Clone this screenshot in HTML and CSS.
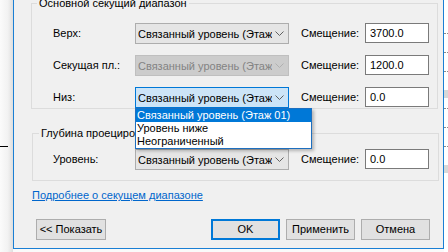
FILE: index.html
```html
<!DOCTYPE html>
<html lang="ru">
<head>
    <meta charset="UTF-8">
    <title>Секущий диапазон</title>
    <link rel="stylesheet" href="styles.css">
</head>
<body>
<div class="screen">
    <div class="side-left"><div class="stub-line"></div></div>

    <div class="dialog">
        <div class="group group-main">
            <div class="group-title">Основной секущий диапазон</div>
            <div class="rows">
                <div class="label">Верх:</div>
                <div class="combo">
                    <span class="combo-text">Связанный уровень (Этаж 01)</span>
                    <svg class="chevron" width="9" height="5" viewBox="0 0 9 5"><polyline points="0.5,0.5 4.5,4.5 8.5,0.5"></polyline></svg>
                </div>
                <div class="label label-offset">Смещение:</div>
                <div class="field">3700.0</div>

                <div class="label">Секущая пл.:</div>
                <div class="combo combo-disabled">
                    <span class="combo-text">Связанный уровень (Этаж 01)</span>
                    <svg class="chevron" width="9" height="5" viewBox="0 0 9 5"><polyline points="0.5,0.5 4.5,4.5 8.5,0.5"></polyline></svg>
                </div>
                <div class="label label-offset">Смещение:</div>
                <div class="field">1200.0</div>

                <div class="label">Низ:</div>
                <div class="combo combo-focus">
                    <span class="combo-text">Связанный уровень (Этаж 01)</span>
                    <svg class="chevron" width="9" height="5" viewBox="0 0 9 5"><polyline points="0.5,0.5 4.5,4.5 8.5,0.5"></polyline></svg>
                    <!-- раскрытый список -->
                    <ul class="dropdown">
                        <li class="selected">Связанный уровень (Этаж 01)</li>
                        <li>Уровень ниже</li>
                        <li>Неограниченный</li>
                    </ul>
                </div>
                <div class="label label-offset">Смещение:</div>
                <div class="field">0.0</div>
            </div>
        </div>

        <div class="group group-depth">
            <div class="group-title">Глубина проецирования</div>
            <div class="rows">
                <div class="label">Уровень:</div>
                <div class="combo">
                    <span class="combo-text">Связанный уровень (Этаж 01)</span>
                    <svg class="chevron" width="9" height="5" viewBox="0 0 9 5"><polyline points="0.5,0.5 4.5,4.5 8.5,0.5"></polyline></svg>
                </div>
                <div class="label label-offset">Смещение:</div>
                <div class="field">0.0</div>
            </div>
        </div>

        <a class="help-link" href="#">Подробнее о секущем диапазоне</a>

        <div class="buttons">
            <div class="btn btn-show">&lt;&lt; Показать</div>
            <div class="btn btn-ok">OK</div>
            <div class="btn">Применить</div>
            <div class="btn">Отмена</div>
        </div>
    </div>

    <div class="side-right">
        <div class="dots dots-1"></div>
        <div class="dots"></div>
        <div class="dots"></div>
        <div class="band"></div>
        <div class="dots"></div>
        <div class="dots"></div>
        <div class="dots"></div>
        <div class="band"></div>
    </div>
</div>
</body>
</html>
```

FILE: styles.css
```css
body {
    margin: 0;
    width: 448px;
    height: 252px;
    overflow: hidden;
    background: #fafafa;
    font-family: "Liberation Sans", Arial, sans-serif;
    font-size: 11px;
    color: #000;
}
.screen {
    display: flex;
    height: 252px;
}
.side-left {
    width: 13px;
    flex-shrink: 0;
    background: linear-gradient(to right, #fbfbfb, #f2f2f2 60%, #dedede);
}
.stub-line {
    margin-top: 146px;
    width: 8px;
    height: 1px;
    background: #000;
}
.dialog {
    width: 431px;
    height: 249px;
    flex-shrink: 0;
    box-sizing: border-box;
    background: #f0f0f0;
    border: 1px solid #1a7fd4;
    border-top: none;
    display: flex;
    flex-direction: column;
}
.side-right {
    flex: 1;
    background: #fff;
    padding-top: 33px;
}
.dots {
    border-top: 1px dotted #8a8a8a;
    margin-bottom: 18px;
}
.band {
    height: 8px;
    background: #d8d8d8;
    margin-bottom: 10px;
}

/* группы */
.group {
    box-sizing: border-box;
    width: 407px;
    border: 1px solid #dcdcdc;
}
.group-main {
    margin: 3px 0 0 17px;
    padding-left: 21px;
}
.group-depth {
    margin: 24px 0 0 18px;
    padding: 0 0 10px 20px;
}
.group-title {
    width: fit-content;
    margin-top: -8px;
    margin-left: -16px;
    padding: 0 2px;
    line-height: 14px;
    background: #f0f0f0;
}
.group-depth .group-title {
    margin-left: -14px;
}
.rows {
    display: grid;
    grid-template-columns: 82px 154px 76px 64px;
    grid-auto-rows: 21px;
    row-gap: 11px;
    align-items: start;
}
.group-main .rows {
    margin-top: 13px;
}
.group-depth .rows {
    margin-top: 9px;
}
.label {
    line-height: 20px;
    white-space: nowrap;
}
.label-offset {
    padding-left: 12px;
}

/* комбобоксы */
.combo {
    position: relative;
    box-sizing: border-box;
    height: 21px;
    display: flex;
    align-items: center;
    padding: 0 4px 0 2px;
    background: #e5e5e5;
    border: 1px solid #adadad;
}
.combo-text {
    flex: 1;
    overflow: hidden;
    white-space: nowrap;
    margin-right: 3px;
}
.chevron {
    flex-shrink: 0;
    fill: none;
    stroke: #606060;
    stroke-width: 1;
}
.combo-disabled {
    background: #cccccc;
    border-color: #bfbfbf;
    color: #838383;
}
.combo-disabled .chevron {
    stroke: #b0b0b0;
}
.combo-focus {
    background: #cce4f7;
    border-color: #0078d7;
}
.dropdown {
    position: absolute;
    top: 20px;
    left: -1px;
    width: 177px;
    margin: 0;
    padding: 0;
    list-style: none;
    box-sizing: border-box;
    background: #fff;
    border: 1px solid #1e6fbf;
    box-shadow: 2px 2px 3px rgba(0, 0, 0, 0.25);
    z-index: 2;
}
.dropdown li {
    height: 13px;
    line-height: 13px;
    padding-left: 1px;
    white-space: nowrap;
}
.dropdown .selected {
    background: #0078d7;
    color: #fff;
}

/* поля */
.field {
    box-sizing: border-box;
    height: 20px;
    line-height: 18px;
    padding-left: 4px;
    background: #fff;
    border: 1px solid #7a7a7a;
}

.help-link {
    margin: 6px 0 0 18px;
    line-height: 16px;
    width: fit-content;
    color: #0066cc;
}

/* кнопки */
.buttons {
    display: flex;
    gap: 6px;
    margin-top: 16px;
    padding-left: 22px;
}
.btn {
    box-sizing: border-box;
    width: 69px;
    height: 21px;
    line-height: 19px;
    text-align: center;
    white-space: nowrap;
    background: #e1e1e1;
    border: 1px solid #adadad;
}
.btn-show {
    width: 70px;
    margin-right: 99px;
}
.btn-ok {
    border: 2px solid #0078d7;
    line-height: 17px;
}
```
